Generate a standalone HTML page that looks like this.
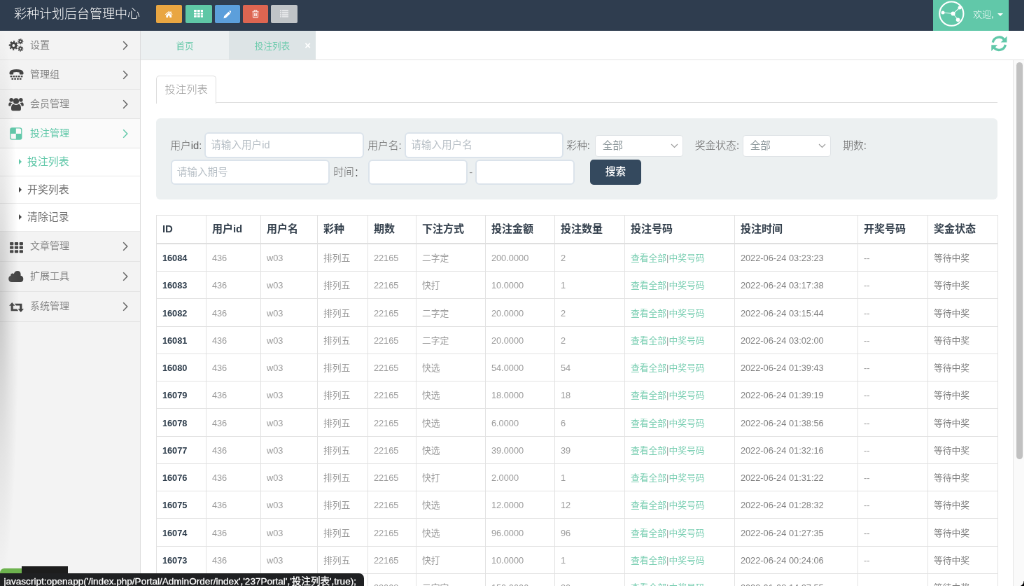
<!DOCTYPE html>
<html lang="zh-CN">
<head>
<meta charset="utf-8">
<title>彩种计划后台管理中心</title>
<style>
*{box-sizing:border-box;margin:0;padding:0}
html,body{width:1024px;height:586px;overflow:hidden;background:#fff}
body{font-family:"Liberation Sans","Noto Sans CJK SC",sans-serif;}
#S{position:absolute;left:0;top:0;width:1463px;height:838px;transform:scale(.7);transform-origin:0 0;will-change:transform;overflow:hidden;background:#fff;font-size:14px;color:#555}
a{text-decoration:none;color:inherit}
/* ---------- navbar ---------- */
#nav{position:absolute;left:0;top:0;width:1463px;height:44px;background:#2f3d4f}
#brand{position:absolute;left:20px;top:0;height:44px;line-height:41px;font-size:18px;color:#fff;font-weight:300;white-space:nowrap}
.nb{position:absolute;top:7.4px;height:25.4px;border-radius:2px}
.nb svg{position:absolute;left:50%;top:50%}
#user{position:absolute;left:1333px;top:0;width:108px;height:44px;background:#61c8a9}
#user .t{position:absolute;left:57px;top:0;line-height:41px;font-size:13px;color:#fff;font-weight:300;white-space:nowrap}
#user .c{position:absolute;left:92px;top:19px;width:0;height:0;border-left:4.5px solid transparent;border-right:4.5px solid transparent;border-top:4.5px solid #fff}
/* ---------- sidebar ---------- */
#side{position:absolute;left:0;top:44px;width:201px;height:794px;background:#f3f3f3;border-right:1px solid #dcdcdc}
#side .m{position:relative;height:42px;border-bottom:1px solid #e4e4e4;line-height:40px;font-size:14px;color:#858585;padding-left:43px;white-space:nowrap}
#side .m svg.i{position:absolute;left:12px;top:11px}
#side .m .ch{position:absolute;left:175px;top:14px}
#side .m.b{height:42.8px;line-height:41px}
#side .m.b svg.i{top:11.5px}
#side .m.on{background:#fafafa;color:#61c8a9}
#side .s{position:relative;height:39.5px;border-bottom:1px solid #e9e9e9;background:#fff;line-height:39.5px;font-size:14.9px;color:#707070;padding-left:39px;white-space:nowrap}
#side .s:before{content:"";position:absolute;left:27px;top:15px;border-left:4px solid #444;border-top:4px solid transparent;border-bottom:4px solid transparent}
#side .s.on{color:#61c8a9}
#side .s.on:before{border-left-color:#61c8a9}
#shade{position:absolute;left:0;top:44px;width:30px;height:794px;pointer-events:none;
 background:radial-gradient(ellipse 27px 400px at 0 390px, rgba(120,120,120,.34), rgba(120,120,120,.13) 55%, rgba(120,120,120,0) 100%)}
/* ---------- task bar ---------- */
#tabs{position:absolute;left:201px;top:44px;width:1262px;height:42px;background:#fff;border-bottom:1px solid #e3e3e3}
#tabs .tb{position:absolute;top:0;height:41px;line-height:44.5px;font-size:12.6px;color:#6ecbad;text-align:center}
#tabs .x{position:absolute;left:234.3px;top:0;line-height:42.5px;color:#fff;font-size:15px;font-weight:bold}
#rf{position:absolute;left:1415px;top:50.3px;width:24.6px;height:24.6px}
/* ---------- content ---------- */
#ct{position:absolute;left:201px;top:86px;width:1246px;height:752px;overflow:hidden;background:#fff}
#ntab{position:absolute;left:21.9px;top:21.5px;width:86.6px;height:40px;border:1px solid #ddd;border-bottom:none;border-radius:5px 5px 0 0;line-height:38px;text-align:center;font-size:15.3px;color:#999;background:#fff;font-weight:300}
#nline{position:absolute;left:108px;top:60px;width:1117px;height:1px;background:#dedede}
#well{position:absolute;left:22.2px;top:83px;width:1202.3px;height:116px;background:#ecf0f1;border-radius:6px}
#well .l{position:absolute;font-size:14.8px;color:#636363;font-weight:300;line-height:20px;white-space:nowrap}
#well .in{position:absolute;height:36.6px;border:2px solid #dbe3eb;border-radius:6px;background:#fff;font-size:14.6px;line-height:33.5px;color:#b7bfc6;padding-left:7px;white-space:nowrap}
#well .se{position:absolute;height:31px;border:1px solid #dfe3e6;border-radius:4px;background:#fff;font-size:14.6px;line-height:29px;color:#8a9599;padding-left:10px;white-space:nowrap}
#well .se svg{position:absolute;right:6px;top:11px}
#btn{position:absolute;left:620px;top:58.6px;width:72.5px;height:36.4px;border-radius:5px;background:#34495e;color:#fff;font-size:14.6px;font-weight:500;line-height:35px;text-align:center}
table{position:absolute;left:21.9px;top:220.5px;width:1202px;border-collapse:collapse;table-layout:fixed;font-size:12.8px}
th,td{border:1px solid #e2e2e2;padding:9px 8px;line-height:20px;text-align:left;white-space:nowrap;overflow:hidden}
th{font-size:15px;color:#34404d;font-weight:bold;border-bottom:2.4px solid #dfdfdf;height:41px}
td{color:#9a9a9a;height:39.24px;padding-top:10.2px;padding-bottom:8px}
td.id{color:#2c3b4a;font-weight:bold}
td.d{color:#808080}
td a{color:#7bcfb3}
/* ---------- scrollbar ---------- */
#sb{position:absolute;left:1447px;top:86px;width:16px;height:752px;background:#fafafa;border-left:1px solid #e8e8e8}
#sb i{position:absolute;left:4px;top:3px;width:8.5px;height:567px;border-radius:5px;background:#c1c1c1}
/* ---------- status bubble ---------- */
#g1{position:absolute;left:0;top:811.5px;width:31px;height:8px;background:#6db24e;border-radius:6px 0 0 0}
#g2{position:absolute;left:31px;top:809px;width:66px;height:10px;background:#1d1d1d}
#st{position:absolute;left:0;top:819px;width:520px;height:19px;background:#1f2022;border-radius:0 7px 0 0;color:#fff;font-size:13.55px;line-height:23.5px;padding-left:5.5px;white-space:nowrap;letter-spacing:0;-webkit-text-stroke:.3px #fff;overflow:hidden}
#cor{position:absolute;left:1455px;top:830px;width:8px;height:8px;background:radial-gradient(circle 8px at 0 0, rgba(0,0,0,0) 7px, #000 8px)}
</style>
</head>
<body>
<div id="S">

<div id="nav">
  <div id="brand">彩种计划后台管理中心</div>
  <a class="nb" style="left:223px;width:37px;background:#e9a642">
    <svg width="12.4" height="10.8" viewBox="0 0 16 14" style="margin:-5.2px 0 0 -6.2px"><path fill="#fff" d="M8 1.2 L1 7.2 L1.9 8.2 L8 3.1 L14.1 8.2 L15 7.2 L12.6 5.1 V1.8 H10.9 V3.7 Z"/><path fill="#fff" d="M8 4.3 L2.9 8.6 V13 H6.6 V9.6 H9.4 V13 H13.1 V8.6 Z"/></svg>
  </a>
  <a class="nb" style="left:264.5px;width:38px;background:#5fc7a6">
    <svg width="13.6" height="10.8" viewBox="0 0 15 13" preserveAspectRatio="none" style="margin:-5.6px 0 0 -6.8px"><g fill="#fff"><rect x="0" y="0" width="4.2" height="3.5" rx=".7"/><rect x="5.4" y="0" width="4.2" height="3.5" rx=".7"/><rect x="10.8" y="0" width="4.2" height="3.5" rx=".7"/><rect x="0" y="4.7" width="4.2" height="3.5" rx=".7"/><rect x="5.4" y="4.7" width="4.2" height="3.5" rx=".7"/><rect x="10.8" y="4.7" width="4.2" height="3.5" rx=".7"/><rect x="0" y="9.4" width="4.2" height="3.5" rx=".7"/><rect x="5.4" y="9.4" width="4.2" height="3.5" rx=".7"/><rect x="10.8" y="9.4" width="4.2" height="3.5" rx=".7"/></g></svg>
  </a>
  <a class="nb" style="left:306.5px;width:36px;background:#5c9fdb">
    <svg width="11.8" height="11.8" viewBox="0 0 14 14" style="margin:-5.3px 0 0 -5.9px"><path fill="#fff" d="M0.6 13.4 L1.4 9.6 L9 2 L12 5 L4.4 12.6 Z M9.9 1.1 L10.7 0.4 Q11.3 -0.1 11.9 0.4 L13.6 2.1 Q14.1 2.7 13.6 3.3 L12.9 4.1 Z"/></svg>
  </a>
  <a class="nb" style="left:347px;width:35.5px;background:#dd6551">
    <svg width="10" height="11.8" viewBox="0 0 12 14" style="margin:-5.8px 0 0 -5px"><path fill="none" stroke="#fff" stroke-opacity=".85" stroke-width="1.3" d="M0.5 3.2 H11.5 M3.8 3 V1.2 Q3.8 .7 4.4 .7 H7.6 Q8.2 .7 8.2 1.2 V3 M1.8 3.4 V12 Q1.8 13.3 3 13.3 H9 Q10.2 13.3 10.2 12 V3.4 M4.3 5.6 V11 M6 5.6 V11 M7.7 5.6 V11"/></svg>
  </a>
  <a class="nb" style="left:387px;width:38px;background:#c0c4c7">
    <svg width="12.8" height="10.7" viewBox="0 0 16 13" preserveAspectRatio="none" style="margin:-5.9px 0 0 -6.4px"><g fill="#e4e6e8"><rect x="0" y="0" width="2.6" height="2.6"/><rect x="3.8" y="0" width="12.2" height="2.6"/><rect x="0" y="3.5" width="2.6" height="2.6"/><rect x="3.8" y="3.5" width="12.2" height="2.6"/><rect x="0" y="7" width="2.6" height="2.6"/><rect x="3.8" y="7" width="12.2" height="2.6"/><rect x="0" y="10.4" width="2.6" height="2.6"/><rect x="3.8" y="10.4" width="12.2" height="2.6"/></g></svg>
  </a>
  <div id="user">
    <svg width="40" height="40" viewBox="0 0 40 40" style="position:absolute;left:6px;top:0"><circle cx="20.3" cy="19.6" r="17.1" fill="none" stroke="#fff" stroke-width="2.1"/><g stroke="#fff" stroke-width="1.1" opacity=".9"><line x1="22.5" y1="19.5" x2="8" y2="18"/><line x1="22.5" y1="19.5" x2="32" y2="11"/><line x1="22.5" y1="19.5" x2="29.5" y2="28"/></g><g fill="#fff"><circle cx="22.5" cy="19.5" r="3"/><circle cx="8" cy="18" r="2.5"/><circle cx="32" cy="11" r="2.5"/><circle cx="29.5" cy="28.2" r="2.8"/></g></svg>
    <span class="t">欢迎,</span><i class="c"></i>
  </div>
</div>

<div id="side">
  <div class="m"><svg class="i" width="22" height="20" viewBox="0 0 22 20" style="left:12px;top:10px"><g fill="none" stroke="#444"><circle cx="7.4" cy="11" r="3.5" stroke-width="3"/><circle cx="7.4" cy="11" r="5.6" stroke-width="2.2" stroke-dasharray="2.2 2.2" stroke-dashoffset="1.1"/><circle cx="17.3" cy="5.2" r="2" stroke-width="1.9"/><circle cx="17.3" cy="5.2" r="3.3" stroke-width="1.5" stroke-dasharray="1.3 1.29" stroke-dashoffset=".6"/><circle cx="17.3" cy="15.6" r="2" stroke-width="1.9"/><circle cx="17.3" cy="15.6" r="3.3" stroke-width="1.5" stroke-dasharray="1.3 1.29" stroke-dashoffset=".6"/></g></svg>设置<svg class="ch" width="8" height="14" viewBox="0 0 8 14"><path d="M1.2 1.2 L6.8 7 L1.2 12.8" fill="none" stroke="#626262" stroke-width="1.45"/></svg></div>
  <div class="m"><svg class="i" width="21" height="20" viewBox="0 0 21 20" style="left:12.5px;top:11px"><g fill="#444"><path d="M0.500 7.600 Q0.500 4 3.800 3 Q10.500 1.200 17.200 3 Q20.500 4 20.500 7.600 V8.600 Q20.500 9.400 19.600 9.400 H15.600 Q14.800 9.400 14.800 8.600 V6.600 Q10.500 5.600 6.200 6.600 V8.600 Q6.200 9.400 5.400 9.400 H1.400 Q0.500 9.400 0.500 8.600Z"/><rect x="1.600" y="11" width="2.600" height="2.300"/><rect x="5.400" y="11" width="2.600" height="2.300"/><rect x="9.200" y="11" width="2.600" height="2.300"/><rect x="13" y="11" width="2.600" height="2.300"/><rect x="16.800" y="11" width="2.600" height="2.300"/><rect x="3.500" y="14.500" width="2.600" height="2.300"/><rect x="7.300" y="14.500" width="2.600" height="2.300"/><rect x="11.100" y="14.500" width="2.600" height="2.300"/><rect x="14.900" y="14.500" width="2.600" height="2.300"/></g></svg>管理组<svg class="ch" width="8" height="14" viewBox="0 0 8 14"><path d="M1.2 1.2 L6.8 7 L1.2 12.8" fill="none" stroke="#626262" stroke-width="1.45"/></svg></div>
  <div class="m"><svg class="i" width="22" height="21" viewBox="0 0 22 21" style="left:12px;top:9.500px"><g fill="#444"><circle cx="11" cy="6.400" r="4.100"/><path d="M4 18 Q3.600 11.400 7.400 10.600 Q11 13.600 14.600 10.600 Q18.400 11.400 18 18 Q17.800 20.200 15.600 20.200 H6.400 Q4.200 20.200 4 18Z"/><circle cx="4.200" cy="4.800" r="2.800"/><circle cx="17.800" cy="4.800" r="2.800"/><path d="M0.200 12.200 Q0.200 8.400 2.600 8.200 Q4 9.200 6.200 8.800 Q3.600 10.400 3.200 13.600 H1.800 Q0.200 13.600 0.200 12.200Z"/><path d="M21.800 12.200 Q21.800 8.400 19.400 8.200 Q18 9.200 15.800 8.800 Q18.400 10.400 18.800 13.600 H20.200 Q21.800 13.600 21.800 12.200Z"/></g></svg>会员管理<svg class="ch" width="8" height="14" viewBox="0 0 8 14"><path d="M1.2 1.2 L6.8 7 L1.2 12.8" fill="none" stroke="#626262" stroke-width="1.45"/></svg></div>
  <div class="m on"><svg class="i" width="21.600" height="22" viewBox="0 0 20 20" preserveAspectRatio="none" style="left:12.300px;top:10.200px"><path fill="#61c8a9" fill-rule="evenodd" d="M5 2 H15 Q18 2 18 5 V15 Q18 18 15 18 H5 Q2 18 2 15 V5 Q2 2 5 2Z M10 3.200 V10 H16.800 V5.200 Q16.800 3.200 14.800 3.200Z M3.200 10 H10 V16.800 H5.200 Q3.200 16.800 3.200 14.800Z"/></svg>投注管理<svg class="ch" width="8" height="14" viewBox="0 0 8 14"><path d="M1.2 1.2 L6.8 7 L1.2 12.8" fill="none" stroke="#61c8a9" stroke-width="1.45"/></svg></div>
  <div class="s on">投注列表</div>
  <div class="s">开奖列表</div>
  <div class="s" style="height:40.2px">清除记录</div>
  <div class="m b"><svg class="i" width="21" height="20.500" viewBox="0 0 20 20" preserveAspectRatio="none" style="left:13px;top:11.500px"><g fill="#444"><rect x="1" y="3" width="5" height="4" rx=".8"/><rect x="7.500" y="3" width="5" height="4" rx=".8"/><rect x="14" y="3" width="5" height="4" rx=".8"/><rect x="1" y="8.400" width="5" height="4" rx=".8"/><rect x="7.500" y="8.400" width="5" height="4" rx=".8"/><rect x="14" y="8.400" width="5" height="4" rx=".8"/><rect x="1" y="13.800" width="5" height="4" rx=".8"/><rect x="7.500" y="13.800" width="5" height="4" rx=".8"/><rect x="14" y="13.800" width="5" height="4" rx=".8"/></g></svg>文章管理<svg class="ch" width="8" height="14" viewBox="0 0 8 14"><path d="M1.2 1.2 L6.8 7 L1.2 12.8" fill="none" stroke="#626262" stroke-width="1.45"/></svg></div>
  <div class="m b"><svg class="i" width="21.500" height="23.500" viewBox="0 0 20 20" preserveAspectRatio="none" style="left:12px;top:9.500px"><path fill="#444" d="M4.600 17 Q0.200 17 0.200 13 Q0.200 10.200 3 9.400 Q2.800 6.800 5.200 6.400 Q6.400 6.200 7.200 7 Q8.400 3.400 12 3.400 Q16.400 3.400 16.400 8 Q16.400 8.600 16.200 9.200 Q19.800 9.800 19.800 13.200 Q19.800 17 16 17Z"/></svg>扩展工具<svg class="ch" width="8" height="14" viewBox="0 0 8 14"><path d="M1.2 1.2 L6.8 7 L1.2 12.8" fill="none" stroke="#626262" stroke-width="1.45"/></svg></div>
  <div class="m b"><svg class="i" width="21" height="14" viewBox="0 0 21 14" style="left:12.500px;top:15.500px"><g fill="#444"><path d="M4.200 0 L0 4.800 H2.600 V12.200 H13.200 L11 9.600 H5.800 V4.800 H8.400Z"/><path d="M16.800 14 L21 9.200 H18.400 V1.800 H7.800 L10 4.400 H15.200 V9.200 H12.600Z"/></g></svg>系统管理<svg class="ch" width="8" height="14" viewBox="0 0 8 14"><path d="M1.2 1.2 L6.8 7 L1.2 12.8" fill="none" stroke="#626262" stroke-width="1.45"/></svg></div>
</div>
<div id="shade"></div>

<div id="tabs">
  <div class="tb" style="left:0;width:126px;background:#ecf0f1">首页</div>
  <div class="tb" style="left:126px;width:124px;background:#dde4e6">投注列表</div>
  <span class="x">×</span>
</div>
<svg id="rf" width="24" height="24" viewBox="0 0 24 24"><g fill="none" stroke="#61c8a9" stroke-width="3.3"><path d="M3.2 10.4 A9 9 0 0 1 19.200 6.600"/><path d="M20.800 13.600 A9 9 0 0 1 4.800 17.400"/></g><g fill="#61c8a9"><path d="M22.800 1.600 V10.200 H14.200Z"/><path d="M1.200 22.400 V13.800 H9.800Z"/></g></svg>

<div id="ct">
  <div id="nline" style="left:21.900px;width:1202.600px"></div>
  <div id="ntab">投注列表</div>
  <div id="well">
    <span class="l" style="left:20px;top:29px">用户id:</span>
    <div class="in" style="left:69px;top:20.300px;width:227.600px">请输入用户id</div>
    <span class="l" style="left:302px;top:29px">用户名:</span>
    <div class="in" style="left:355px;top:20.300px;width:227px">请输入用户名</div>
    <span class="l" style="left:586px;top:29px">彩种:</span>
    <div class="se" style="left:626.500px;top:24px;width:126.500px">全部<svg width="11" height="7" viewBox="0 0 11 7"><path d="M1 1 L5.500 5.500 L10 1" fill="none" stroke="#999" stroke-width="1.100"/></svg></div>
    <span class="l" style="left:769.500px;top:29px">奖金状态:</span>
    <div class="se" style="left:837.500px;top:24px;width:126.500px">全部<svg width="11" height="7" viewBox="0 0 11 7"><path d="M1 1 L5.500 5.500 L10 1" fill="none" stroke="#999" stroke-width="1.100"/></svg></div>
    <span class="l" style="left:981px;top:29px">期数:</span>
    <div class="in" style="left:20.500px;top:58.600px;width:227px">请输入期号</div>
    <span class="l" style="left:253px;top:67px">时间：</span>
    <div class="in" style="left:302.500px;top:58.600px;width:142px"></div>
    <span class="l" style="left:447px;top:67px;color:#999">-</span>
    <div class="in" style="left:456px;top:58.600px;width:142px"></div>
    <div id="btn">搜索</div>
  </div>
  <table>
    <colgroup><col style="width:71px"><col style="width:78px"><col style="width:81px"><col style="width:72px"><col style="width:69px"><col style="width:99px"><col style="width:99px"><col style="width:100px"><col style="width:157px"><col style="width:176px"><col style="width:100px"><col style="width:100px"></colgroup>
    <thead><tr><th>ID</th><th>用户id</th><th>用户名</th><th>彩种</th><th>期数</th><th>下注方式</th><th>投注金额</th><th>投注数量</th><th>投注号码</th><th>投注时间</th><th>开奖号码</th><th>奖金状态</th></tr></thead>
    <tbody>
<tr><td class="id">16084</td><td>436</td><td>w03</td><td>排列五</td><td>22165</td><td>二字定</td><td>200.0000</td><td>2</td><td><a>查看全部</a>|<a>中奖号码</a></td><td class="d">2022-06-24 03:23:23</td><td>--</td><td class="d">等待中奖</td></tr>
<tr><td class="id">16083</td><td>436</td><td>w03</td><td>排列五</td><td>22165</td><td>快打</td><td>10.0000</td><td>1</td><td><a>查看全部</a>|<a>中奖号码</a></td><td class="d">2022-06-24 03:17:38</td><td>--</td><td class="d">等待中奖</td></tr>
<tr><td class="id">16082</td><td>436</td><td>w03</td><td>排列五</td><td>22165</td><td>二字定</td><td>20.0000</td><td>2</td><td><a>查看全部</a>|<a>中奖号码</a></td><td class="d">2022-06-24 03:15:44</td><td>--</td><td class="d">等待中奖</td></tr>
<tr><td class="id">16081</td><td>436</td><td>w03</td><td>排列五</td><td>22165</td><td>二字定</td><td>20.0000</td><td>2</td><td><a>查看全部</a>|<a>中奖号码</a></td><td class="d">2022-06-24 03:02:00</td><td>--</td><td class="d">等待中奖</td></tr>
<tr><td class="id">16080</td><td>436</td><td>w03</td><td>排列五</td><td>22165</td><td>快选</td><td>54.0000</td><td>54</td><td><a>查看全部</a>|<a>中奖号码</a></td><td class="d">2022-06-24 01:39:43</td><td>--</td><td class="d">等待中奖</td></tr>
<tr><td class="id">16079</td><td>436</td><td>w03</td><td>排列五</td><td>22165</td><td>快选</td><td>18.0000</td><td>18</td><td><a>查看全部</a>|<a>中奖号码</a></td><td class="d">2022-06-24 01:39:19</td><td>--</td><td class="d">等待中奖</td></tr>
<tr><td class="id">16078</td><td>436</td><td>w03</td><td>排列五</td><td>22165</td><td>快选</td><td>6.0000</td><td>6</td><td><a>查看全部</a>|<a>中奖号码</a></td><td class="d">2022-06-24 01:38:56</td><td>--</td><td class="d">等待中奖</td></tr>
<tr><td class="id">16077</td><td>436</td><td>w03</td><td>排列五</td><td>22165</td><td>快选</td><td>39.0000</td><td>39</td><td><a>查看全部</a>|<a>中奖号码</a></td><td class="d">2022-06-24 01:32:16</td><td>--</td><td class="d">等待中奖</td></tr>
<tr><td class="id">16076</td><td>436</td><td>w03</td><td>排列五</td><td>22165</td><td>快打</td><td>2.0000</td><td>1</td><td><a>查看全部</a>|<a>中奖号码</a></td><td class="d">2022-06-24 01:31:22</td><td>--</td><td class="d">等待中奖</td></tr>
<tr><td class="id">16075</td><td>436</td><td>w03</td><td>排列五</td><td>22165</td><td>快选</td><td>12.0000</td><td>12</td><td><a>查看全部</a>|<a>中奖号码</a></td><td class="d">2022-06-24 01:28:32</td><td>--</td><td class="d">等待中奖</td></tr>
<tr><td class="id">16074</td><td>436</td><td>w03</td><td>排列五</td><td>22165</td><td>快选</td><td>96.0000</td><td>96</td><td><a>查看全部</a>|<a>中奖号码</a></td><td class="d">2022-06-24 01:27:35</td><td>--</td><td class="d">等待中奖</td></tr>
<tr><td class="id">16073</td><td>436</td><td>w03</td><td>排列五</td><td>22165</td><td>快打</td><td>10.0000</td><td>1</td><td><a>查看全部</a>|<a>中奖号码</a></td><td class="d">2022-06-24 00:24:06</td><td>--</td><td class="d">等待中奖</td></tr>
<tr><td class="id">16072</td><td>436</td><td>w03</td><td>排列五</td><td>22008</td><td>二字定</td><td>150.0000</td><td>30</td><td><a>查看全部</a>|<a>中奖号码</a></td><td class="d">2022-01-08 14:27:55</td><td>--</td><td class="d">等待中奖</td></tr>
    </tbody>
  </table>
</div>

<div id="sb"><i></i></div>
<div id="g1"></div><div id="g2"></div>
<div id="st">javascript:openapp('/index.php/Portal/AdminOrder/index','237Portal','投注列表',true);</div>
<div id="cor"></div>

</div>
</body>
</html>
